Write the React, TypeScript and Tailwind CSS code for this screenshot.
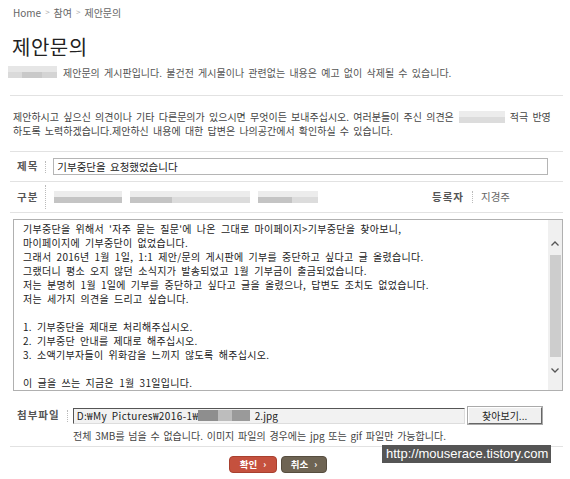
import React from 'react';

const bodyLines = [
  "기부중단을 위해서 '자주 묻는 질문'에 나온 그대로 마이페이지>기부중단을 찾아보니,",
  '마이페이지에 기부중단이 없었습니다.',
  '그래서 2016년 1월 1일, 1:1 제안/문의 게시판에 기부를 중단하고 싶다고 글 올렸습니다.',
  '그랬더니 평소 오지 않던 소식지가 발송되었고 1월 기부금이 출금되었습니다.',
  '저는 분명히 1월 1일에 기부를 중단하고 싶다고 글을 올렸으나, 답변도 조치도 없었습니다.',
  '저는 세가지 의견을 드리고 싶습니다.',
  '',
  '1. 기부중단을 제대로 처리해주십시오.',
  '2. 기부중단 안내를 제대로 해주십시오.',
  '3. 소액기부자들이 위화감을 느끼지 않도록 해주십시오.',
  '',
  '이 글을 쓰는 지금은 1월 31일입니다.',
];

// blurred-out text, just gray smudges
const Smudge = ({ w, dark = false }: { w: number; dark?: boolean }) => (
  <div className="flex flex-col blur-[0.6px]" style={{ width: w }}>
    <div className="h-[6px] bg-[#ececec]" />
    <div className={`h-[6px] ${dark ? 'bg-[#c4c4c4]' : 'bg-[#dcdcdc]'}`} />
  </div>
);

const Label = ({ children }: { children: React.ReactNode }) => (
  <span className="text-[10.5px] font-bold tracking-[1px] text-[#555] leading-none">{children}</span>
);

const Sep = () => <span className="h-[12px] border-l border-dotted border-[#bbb]" />;

const Chevron = ({ up }: { up?: boolean }) => (
  <svg width="8" height="5" viewBox="0 0 8 5" className="block">
    <path d={up ? 'M0.5 4.5 L4 1 L7.5 4.5' : 'M0.5 0.5 L4 4 L7.5 0.5'} fill="none" stroke="#555" strokeWidth="1.3" />
  </svg>
);

export default function App() {
  return (
    <div className="relative w-[570px] h-[479px] overflow-hidden bg-white font-['Noto_Sans_CJK_KR',sans-serif] text-[#444] [word-spacing:2px]">
      {/* breadcrumb */}
      <div className="h-[24px] pl-[13px] flex items-center gap-[4px] text-[10px] text-[#666]">
        <span>Home</span>
        <span className="text-[#aaa] text-[8px]">&gt;</span>
        <span>참여</span>
        <span className="text-[#aaa] text-[8px]">&gt;</span>
        <span>제안문의</span>
      </div>

      <h1 className="h-[40px] pt-[12px] pl-[12px] text-[20px] leading-[21px] tracking-[0.5px] text-[#222]">제안문의</h1>

      <div className="h-[16px] pl-[8px] flex items-center gap-[6px] text-[10px] text-[#555]">
        <div className="w-[49px] h-[12px] flex flex-col blur-[0.5px]">
          <div className="h-[6px] bg-[#e6e6e6]" />
          <div className="h-[6px] flex">
            <div className="w-[14px] bg-[#dadada]" />
            <div className="w-[20px] bg-[#c9c9c9]" />
            <div className="w-[15px] bg-[#d4d4d4]" />
          </div>
        </div>
        <span>제안문의 게시판입니다. 불건전 게시물이나 관련없는 내용은 예고 없이 삭제될 수 있습니다.</span>
      </div>

      <div className="mt-[15px] mx-[10px] w-[553px] h-px bg-[#e2e2e2]" />

      <div className="pl-[13px] pt-[14px] pr-[4px] text-[10px] leading-[14px] text-[#444] whitespace-nowrap">
        <div className="flex items-center">
          <span>제안하시고 싶으신 의견이나 기타 다른문의가 있으시면 무엇이든 보내주십시오. 여러분들이 주신 의견은</span>
          <div className="ml-[5px] mr-[5px]">
            <Smudge w={46} />
          </div>
          <span>적극 반영</span>
        </div>
        <div>하도록 노력하겠습니다.제안하신 내용에 대한 답변은 나의공간에서 확인하실 수 있습니다.</div>
      </div>

      {/* form */}
      <div className="mt-[13px] mx-[10px] w-[553px] border-t border-[#e2e2e2]">
        <div className="h-[30px] pl-[7px] pr-[15px] flex items-center gap-[7px] border-b border-[#e2e2e2]">
          <Label>제목</Label>
          <Sep />
          <div className="flex-1 h-[17px] border border-[#b5b5b5] pl-[3px] flex items-center text-[10.5px] text-[#222]">
            기부중단을 요청했었습니다
          </div>
        </div>

        <div className="h-[31px] pl-[7px] flex items-center border-b border-[#e2e2e2]">
          <Label>구분</Label>
          <span className="ml-[7px]"><Sep /></span>
          <div className="ml-[8px] flex gap-[8px]">
            <Smudge w={68} dark />
            <div className="flex">
              <Smudge w={42} dark />
              <Smudge w={78} />
            </div>
            <div className="flex">
              <Smudge w={34} dark />
              <Smudge w={26} />
            </div>
          </div>
          <div className="ml-auto mr-[53px] flex items-center gap-[8px]">
            <Label>등록자</Label>
            <Sep />
            <span className="text-[10.5px] text-[#666]">지경주</span>
          </div>
        </div>

        <div className="mt-[6px] ml-[3px] h-[172px] border border-[#b0b0b0] flex">
          <div className="flex-1 pl-[9px] pt-[2px] text-[10px] leading-[14px] tracking-[0.3px] [word-spacing:2.5px] text-[#222] whitespace-pre">
            {bodyLines.map((l, i) => (
              <div key={i} className="h-[14px]">{l}</div>
            ))}
          </div>
          <div className="w-[14px] bg-[#f0f0f0] flex flex-col items-center">
            <div className="h-[35px] pt-[21px]"><Chevron up /></div>
            <div className="w-[11px] h-[102px] bg-[#cdcdcd]" />
            <div className="pt-[11px]"><Chevron /></div>
          </div>
        </div>

        <div className="pt-[16px] pl-[7px] flex items-center gap-[7px]">
          <Label>첨부파일</Label>
          <Sep />
          <div className="ml-[-2px] w-[392px] h-[16px] border border-t-[#555] border-l-[#555] border-b-[#ddd] border-r-[#ddd] bg-[#f2f2f2] pl-[3px] flex items-center text-[10px] text-[#222] whitespace-pre">
            <span className="tracking-[0.4px]">D:₩My Pictures₩2016-1₩</span>
            <div className="w-[52px] h-[11px] flex blur-[0.5px]">
              <div className="w-[20px] bg-[#8e8e8e]" />
              <div className="w-[14px] bg-[#bdbdbd]" />
              <div className="w-[18px] bg-[#9a9a9a]" />
            </div>
            <span> 2.jpg</span>
          </div>
          <div className="ml-[-4px] w-[74px] h-[17px] bg-[#f0f0f0] border border-t-white border-l-white border-b-[#666] border-r-[#666] shadow-[0_0_0_1px_#aaa] flex items-center justify-center text-[10px] text-[#222]">
            찾아보기...
          </div>
        </div>
        <div className="pl-[63px] mt-[5px] text-[10px] leading-[14px] text-[#444] [word-spacing:1.5px]">
          전체 3MB를 넘을 수 없습니다. 이미지 파일의 경우에는 jpg 또는 gif 파일만 가능합니다.
        </div>
        <div className="mt-[3px] h-px bg-[#e2e2e2]" />
      </div>

      <div className="mt-[9px] pl-[229px] flex gap-[4px] [word-spacing:0]">
        <button className="w-[48px] h-[17px] rounded-[4px] bg-[#c5513e] border border-[#a8402f] text-white text-[9.5px] font-bold flex items-center justify-center gap-[6px] leading-none">
          <span>확인</span><span className="text-[9px]">›</span>
        </button>
        <button className="w-[46px] h-[17px] rounded-[4px] bg-[#6e6453] border border-[#564d3f] text-white text-[9.5px] font-bold flex items-center justify-center gap-[6px] leading-none">
          <span>취소</span><span className="text-[9px]">›</span>
        </button>
      </div>

      {/* watermark overlay */}
      <div className="absolute left-[382px] top-[445px] w-[169px] h-[18px] bg-[#555] text-white text-[13px] font-['Liberation_Sans',sans-serif] leading-[18px] pl-[4px] [word-spacing:0]">
        http://mouserace.tistory.com
      </div>
    </div>
  );
}
